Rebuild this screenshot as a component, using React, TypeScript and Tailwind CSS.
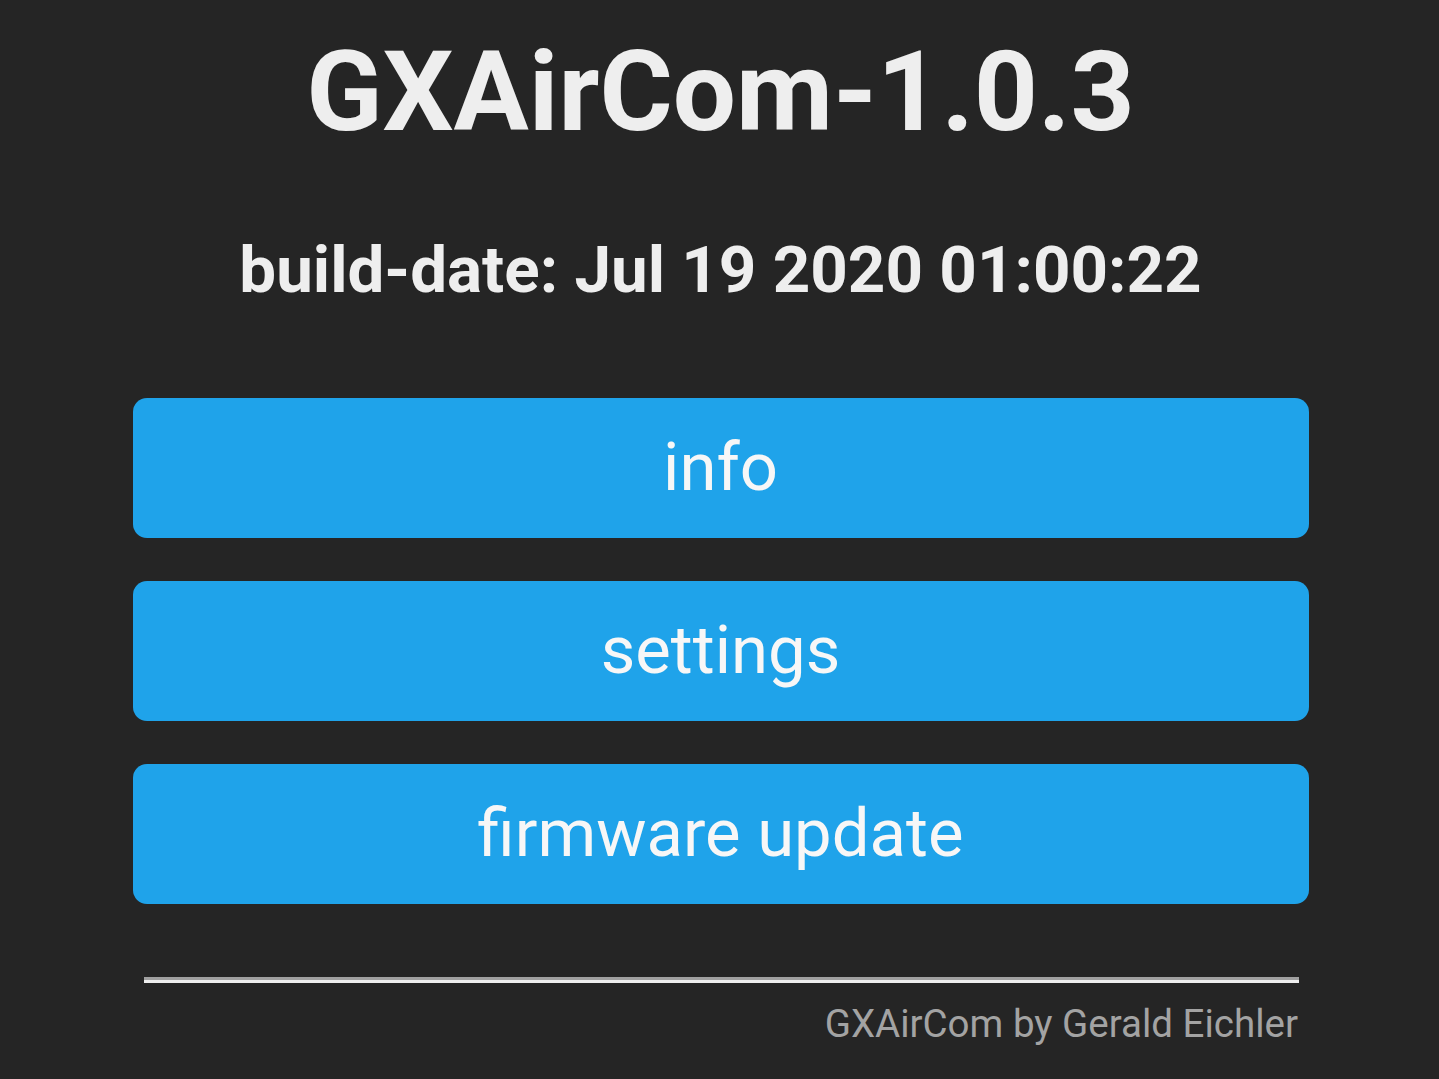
const buttons = ['info', 'settings', 'firmware update'];

export default function App() {
  return (
    <div
      className="min-h-[1079px] bg-[#252525] text-[#eeeeee]"
      style={{ fontFamily: 'Roboto, "Noto Sans", sans-serif' }}
    >
      <div className="mx-auto flex w-[1178px] flex-col items-center pl-[2px] pt-[24px]">
        <h1 className="text-[112px] font-bold leading-[135px]">GXAirCom-1.0.3</h1>
        <h2 className="mt-[75px] text-[65.5px] font-bold leading-[72px]">
          build-date: Jul 19 2020 01:00:22
        </h2>
        <div className="mt-[92px] flex w-full flex-col gap-[43px]">
          {buttons.map((label) => (
            <button
              key={label}
              className="h-[140px] w-full rounded-[14px] bg-[#1fa3ea] pb-[2px] text-[67px] leading-none text-[#f7f7f7]"
            >
              {label}
            </button>
          ))}
        </div>
        <hr className="ml-[2px] mt-[73px] h-[6px] w-[1155px] border-0 border-t-[3px] border-b-[3px] border-t-[#a0a0a0] border-b-[#eeeeee]" />
        <p className="mt-[17px] w-[1155px] text-right text-[38.5px] leading-[48px] text-[#a3a3a3]">
          GXAirCom by Gerald Eichler
        </p>
      </div>
    </div>
  );
}
